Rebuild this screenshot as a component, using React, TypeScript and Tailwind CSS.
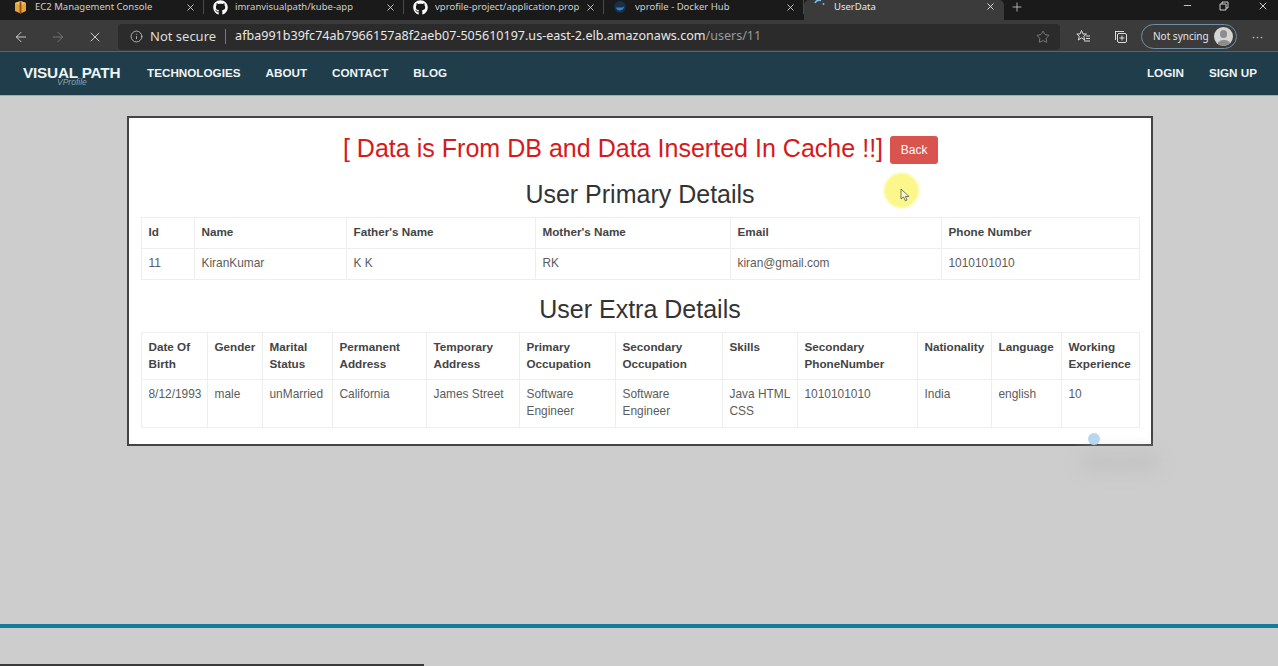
import { ArrowLeft, ArrowRight, Info, Minus, Plus, Star, X } from "lucide-react";
import { FaGithub } from "react-icons/fa";

const sans = "[font-family:'Liberation_Sans',Arial,sans-serif]";

const tabs = [
  { title: "EC2 Management Console", icon: "aws" },
  { title: "imranvisualpath/kube-app", icon: "github" },
  { title: "vprofile-project/application.prop", icon: "github" },
  { title: "vprofile - Docker Hub", icon: "docker" },
];

const primaryColumns = [53, 152, 189, 195, 211, 198];
const primaryHead = ["Id", "Name", "Father's Name", "Mother's Name", "Email", "Phone Number"];
const primaryRow = ["11", "KiranKumar", "K K", "RK", "kiran@gmail.com", "1010101010"];

const extraColumns = [66, 55, 70, 94, 93, 96, 107, 75, 120, 74, 70, 78];
const extraHead = [
  "Date Of Birth",
  "Gender",
  "Marital Status",
  "Permanent Address",
  "Temporary Address",
  "Primary Occupation",
  "Secondary Occupation",
  "Skills",
  "Secondary PhoneNumber",
  "Nationality",
  "Language",
  "Working Experience",
];
const extraRow = [
  "8/12/1993",
  "male",
  "unMarried",
  "California",
  "James Street",
  "Software Engineer",
  "Software Engineer",
  "Java\u00A0HTML CSS",
  "1010101010",
  "India",
  "english",
  "10",
];

function TabIcon({ kind }: { kind: string }) {
  if (kind === "aws") {
    return (
      <svg width="15" height="14" viewBox="0 0 15 14" className="shrink-0">
        <path d="M2 3 L7.5 1 L13 3 V11 L7.5 13.5 L2 11 Z" fill="#e8a33d" />
        <path d="M2 3 L7.5 5 L13 3 L7.5 1 Z" fill="#f5c46b" />
        <path d="M6.5 1.5 H8.5 V13 H6.5 Z" fill="#8a5a16" />
      </svg>
    );
  }
  if (kind === "github") {
    return <FaGithub className="shrink-0 text-[15px] text-white" />;
  }
  return (
    <svg width="15" height="14" viewBox="0 0 15 14" className="shrink-0">
      <circle cx="7" cy="7" r="6" fill="#14304d" />
      <path d="M3 7.5 H9.5 C10 6.5 10.5 6.5 11 7 C10.5 9.5 8.5 10.5 6.5 10.5 C4.5 10.5 3.5 9.5 3 7.5 Z" fill="#3f7fb5" />
    </svg>
  );
}

function DataTable({
  columns,
  head,
  row,
  headHeight,
  rowHeight,
}: {
  columns: number[];
  head: string[];
  row: string[];
  headHeight: string;
  rowHeight: string;
}) {
  return (
    <table className="w-[998px] table-fixed border-collapse text-[11.9px] leading-[17px] text-[#5c5c5c]">
      <colgroup>
        {columns.map((w, i) => (
          <col key={i} style={{ width: w }} />
        ))}
      </colgroup>
      <tbody>
        <tr className={headHeight}>
          {head.map((h) => (
            <th key={h} className="border border-[#eeeeee] px-[7px] pb-[5px] pt-[5px] text-left align-top text-[11.7px] font-bold text-[#444]">
              {h}
            </th>
          ))}
        </tr>
        <tr className={rowHeight}>
          {row.map((c, i) => (
            <td key={i} className="border border-[#eeeeee] px-[7px] pb-[5px] pt-[6px] align-top">
              {c}
            </td>
          ))}
        </tr>
      </tbody>
    </table>
  );
}

export default function App() {
  return (
    <div className={`relative flex h-[666px] w-[1278px] flex-col overflow-hidden bg-[#cdcdcd] ${sans}`}>
      {/* tab strip */}
      <div className="flex h-[20px] items-start overflow-hidden bg-[#1a1a1a] pl-[4px] text-[9.5px] text-[#cfcfcf] [font-family:'Noto_Sans',sans-serif]">
        {tabs.map((t) => (
          <div key={t.title} className="flex h-[14px] w-[200px] items-center border-r border-[#4a4a4a] pl-[9px] pr-[7px]">
            <TabIcon kind={t.icon} />
            <span className="ml-[7px] flex-1 overflow-hidden whitespace-nowrap leading-[12px]">{t.title}</span>
            <X size={11} className="ml-1 shrink-0 text-[#cfcfcf]" />
          </div>
        ))}
        <div className="flex h-[20px] w-[200px] items-start rounded-t-[5px] bg-[#3b3b3b] pl-[10px] pr-[8px] text-[#e8e8e8]">
          <svg width="12" height="9" viewBox="0 0 12 9" className="shrink-0">
            <path d="M1 3 A5 5 0 0 1 7 0.5" fill="none" stroke="#7cc0f0" strokeWidth="1.5" />
            <circle cx="9.5" cy="4" r="0.9" fill="#7cc0f0" />
          </svg>
          <span className="ml-[8px] flex-1 leading-[13px]">UserData</span>
          <X size={11} className="mt-px shrink-0" />
        </div>
        <Plus size={14} strokeWidth={1.3} className="ml-[6px] text-[#d5d5d5]" />
        <div className="ml-auto flex w-[102px] items-start text-[#cfcfcf]">
          <Minus size={11} className="ml-[6px]" />
          <svg width="10" height="10" viewBox="0 0 10 10" className="ml-[26px] mt-px">
            <path d="M1 3 H7 V9 H1 Z M3 3 V1 H9 V7 H7" fill="none" stroke="currentColor" />
          </svg>
          <X size={12} className="ml-[28px]" />
        </div>
      </div>

      {/* toolbar */}
      <div className="flex h-[32px] items-center border-b border-[#5a6468] bg-[#3b3b3b] pl-[13px] pt-[2px] text-[#e5e5e5] [font-family:'Noto_Sans',sans-serif]">
        <ArrowLeft size={16} strokeWidth={1.4} className="text-[#d5d5d5]" />
        <ArrowRight size={16} strokeWidth={1.4} className="ml-[21px] text-[#7a7a7a]" />
        <X size={16} strokeWidth={1.4} className="ml-[21px] text-[#d5d5d5]" />
        <div className="ml-[15px] flex h-[26px] w-[942px] items-center rounded-[4px] bg-[#2b2b2b] pl-[12px] pr-[10px] text-[13px]">
          <Info size={13} strokeWidth={1.4} className="text-[#d5d5d5]" />
          <span className="ml-[7px] text-[#dddddd]">Not secure</span>
          <span className="ml-[9px] h-[15px] w-px bg-[#777]" />
          <span className="ml-[9px] whitespace-nowrap text-[12.55px] text-[#e8e8e8]">
            afba991b39fc74ab7966157a8f2aeb07-505610197.us-east-2.elb.amazonaws.com
            <span className="text-[#9a9a9a]">/users/11</span>
          </span>
          <Star size={14} strokeWidth={1.2} className="ml-auto text-[#9a9a9a]" />
        </div>
        <svg width="15" height="15" viewBox="0 0 15 15" className="ml-[16px] text-[#dcdcdc]">
          <path d="M5.5 1.5 L7 5 H10.5 L7.7 7.3 L8.7 11 L5.5 8.8 L2.3 11 L3.3 7.3 L0.8 5 H4 Z" fill="none" stroke="currentColor" />
          <path d="M10 7 H14 M10 9.5 H14 M8 12 H14" stroke="currentColor" />
        </svg>
        <svg width="15" height="15" viewBox="0 0 15 15" className="ml-[22px] text-[#dcdcdc]">
          <path d="M3 3 H11 V2 H2 V11 H3 Z" fill="currentColor" />
          <rect x="4.5" y="4.5" width="9" height="9" rx="1.5" fill="none" stroke="currentColor" />
          <path d="M9 6.5 V11.5 M6.5 9 H11.5" stroke="currentColor" />
        </svg>
        <div className="ml-[13px] flex h-[25px] w-[96px] items-center rounded-full border border-[#6d8ea3] pl-[11px] pr-[3px] text-[10px] text-[#e5e5e5]">
          <span className="flex-1 whitespace-nowrap">Not syncing</span>
          <span className="relative flex h-[19px] w-[19px] items-end justify-center overflow-hidden rounded-full bg-[#d4d4d4]">
            <span className="absolute left-[6px] top-[3px] h-[8px] w-[7px] rounded-full bg-[#8d8d8d]" />
            <span className="h-[6px] w-[14px] rounded-t-full bg-[#8d8d8d]" />
          </span>
        </div>
        <span className="ml-[15px] text-[11px] leading-none tracking-[1px] text-[#cfcfcf]">···</span>
      </div>

      {/* site nav */}
      <nav className="flex h-[44px] items-center border-b border-[#9fb0b4] bg-[#1f3d4a] pb-[2px] pl-[23px] pr-[21px] font-bold text-white">
        <div className="relative w-[124px]">
          <span className="block text-[15.3px] leading-[12px] tracking-[-0.2px] text-[#eef3f4]">VISUAL PATH</span>
          <span className="absolute left-[34px] top-[12px] text-[8.5px] font-normal italic leading-[7px] text-[#8ea2aa]">VProfile</span>
        </div>
        <div className="flex gap-[25px] text-[11.7px] text-[#f0f4f5]">
          <span>TECHNOLOGIES</span>
          <span>ABOUT</span>
          <span>CONTACT</span>
          <span>BLOG</span>
        </div>
        <div className="ml-auto flex gap-[25px] text-[11.7px] text-[#f0f4f5]">
          <span>LOGIN</span>
          <span>SIGN UP</span>
        </div>
      </nav>

      {/* content */}
      <main className="flex flex-1 flex-col pt-[20px]">
        <div className="ml-[127px] flex h-[330px] w-[1026px] flex-col items-center border-2 border-[#444444] bg-white">
          <div className="ml-px mt-[17px] flex h-[28px] items-center">
            <h1 className="whitespace-nowrap text-[25.05px] font-normal leading-none text-[#d7191c]">
              [ Data is From DB and Data Inserted In Cache !!]
            </h1>
            <button className="ml-[7px] mt-[2px] h-[28px] w-[48px] rounded-[3px] bg-[#d9534f] text-[12px] text-white">
              Back
            </button>
          </div>
          <h2 className="mt-[17px] text-[25px] font-normal leading-[28px] text-[#333]">User Primary Details</h2>
          <div className="mt-[9px]">
            <DataTable columns={primaryColumns} head={primaryHead} row={primaryRow} headHeight="h-[31px]" rowHeight="h-[31px]" />
          </div>
          <h2 className="mt-[15px] text-[25px] font-normal leading-[28px] text-[#333]">User Extra Details</h2>
          <div className="mt-[9px]">
            <DataTable columns={extraColumns} head={extraHead} row={extraRow} headHeight="h-[47px]" rowHeight="h-[48px]" />
          </div>
        </div>
        <div className="mb-[36px] mt-auto h-[4px] w-full bg-[#147b9b]" />
      </main>

      {/* bottom edge of the video player */}
      <div className="h-[2px] w-[424px] bg-[#3a3a3a]" />

      {/* cursor highlight */}
      <div className="absolute left-[884px] top-[173px] h-[35px] w-[35px] rounded-full bg-[#fbf78a] blur-[1px]" />
      <svg width="11" height="14" viewBox="0 0 11 14" className="absolute left-[900px] top-[188px]">
        <path d="M1 1 V11 L3.5 9 L5.5 13 L7 12 L5.3 8.5 H9 Z" fill="#fbf9c8" stroke="#555" strokeWidth="0.8" />
      </svg>
      <div className="absolute left-[1088px] top-[433px] h-[12px] w-[12px] rounded-full bg-[#b7d8f2]" />
      <div className="absolute left-[1080px] top-[452px] h-[20px] w-[80px] rounded-full bg-[#c4c4c4] blur-[8px]" />
    </div>
  );
}
